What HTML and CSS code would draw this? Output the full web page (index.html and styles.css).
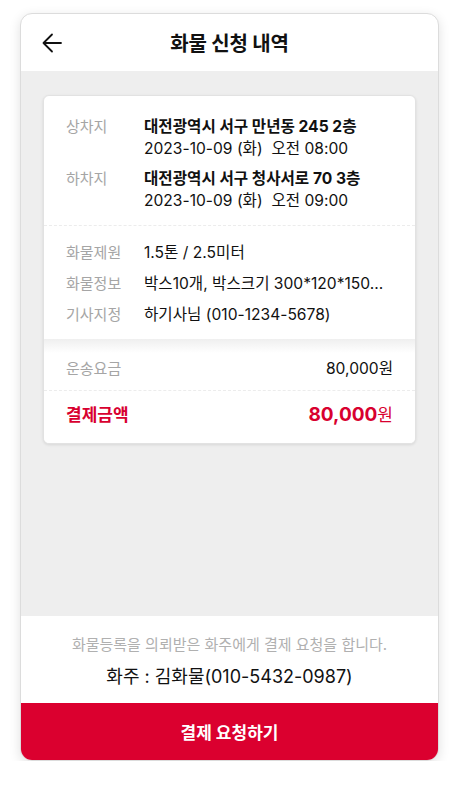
FILE: index.html
```html
<!DOCTYPE html>
<html lang="ko">
<head>
<meta charset="utf-8">
<title>화물 신청 내역</title>
<link rel="stylesheet" href="styles.css">
</head>
<body>
<div class="phone">
  <header class="topbar">
    <button class="back" aria-label="뒤로">
      <svg width="22" height="22" viewBox="0 0 22 22" fill="none" stroke="#111" stroke-width="1.8" stroke-linecap="round" stroke-linejoin="round"><path d="M20 11H2.5M11 2.5L2.5 11L11 19.5"/></svg>
    </button>
    <h1 class="title">화물 신청 내역</h1>
    <span class="spacer"></span>
  </header>
  <main class="content">
    <section class="card">
      <div class="sec sec-route">
        <div class="row">
          <span class="label">상차지</span>
          <div class="val">
            <div class="strong">대전광역시 서구 만년동 245 2층</div>
            <div>2023-10-09 (화)&nbsp; 오전 08:00</div>
          </div>
        </div>
        <div class="row">
          <span class="label">하차지</span>
          <div class="val">
            <div class="strong">대전광역시 서구 청사서로 70 3층</div>
            <div>2023-10-09 (화)&nbsp; 오전 09:00</div>
          </div>
        </div>
      </div>
      <div class="sec sec-info">
        <div class="row"><span class="label">화물제원</span><div class="val">1.5톤 / 2.5미터</div></div>
        <div class="row"><span class="label">화물정보</span><div class="val">박스10개, 박스크기 300*120*150...</div></div>
        <div class="row"><span class="label">기사지정</span><div class="val">하기사님 (010-1234-5678)</div></div>
      </div>
      <div class="sec-fee">
        <div class="fee"><span class="fee-label">운송요금</span><span class="amount">80,000원</span></div>
        <div class="total"><span>결제금액</span><span><b>80,000</b>원</span></div>
      </div>
    </section>
  </main>
  <footer class="bottom">
    <p class="note">화물등록을 의뢰받은 화주에게 결제 요청을 합니다.</p>
    <p class="owner">화주 : 김화물(010-5432-0987)</p>
  </footer>
  <button class="pay">결제 요청하기</button>
</div>
</body>
</html>
```

FILE: styles.css
```css
* { box-sizing: border-box; }
html, body { margin: 0; padding: 0; background: #fff; }
body {
  font-family: "Inter", "Noto Sans CJK KR", sans-serif;
  color: #111;
}
.phone {
  width: 419px;
  height: 748px;
  margin: 13px 0 0 20px;
  border: 1px solid #dcdcdc;
  border-radius: 12px;
  overflow: hidden;
  display: flex;
  flex-direction: column;
  box-shadow: 0 3px 12px rgba(0,0,0,0.12);
  background: #fff;
}
.topbar {
  height: 57px;
  display: grid;
  grid-template-columns: 60px 1fr 60px;
  align-items: center;
  flex: none;
}
.back {
  border: 0;
  background: none;
  padding: 0 0 0 20px;
  margin: 0;
  display: flex;
  align-items: center;
  height: 100%;
  cursor: pointer;
}
.title {
  margin: 0 0 1px;
  text-align: center;
  font-size: 20px;
  font-weight: 700;
  letter-spacing: -0.2px;
}
.content {
  flex: 1;
  background: #eeeeee;
  padding: 24px 22px;
}
.card {
  background: #fff;
  border: 1px solid #e2e2e2;
  border-radius: 6px;
  box-shadow: 0 1px 3px rgba(0,0,0,0.10);
  overflow: hidden;
}
.sec { padding: 0 22px; }
.row { display: flex; }
.label {
  width: 78px;
  flex: none;
  color: #a5a5a5;
  font-size: 15px;
  line-height: 22px;
}
.val {
  font-size: 15.6px;
  line-height: 22px;
  color: #111;
}
.strong { font-weight: 700; }
.sec-route {
  padding-top: 20px;
  padding-bottom: 13px;
  display: flex;
  flex-direction: column;
  gap: 8px;
  border-bottom: 1px dashed #ececec;
}
.sec-info {
  padding-top: 16px;
  padding-bottom: 13px;
  display: flex;
  flex-direction: column;
  gap: 9px;
}
.sec-fee {
  background: linear-gradient(#efefef, #fff 14px);
}
.fee {
  display: flex;
  justify-content: space-between;
  align-items: center;
  padding: 19px 22px 10px;
  border-bottom: 1px dashed #ececec;
  line-height: 22px;
}
.fee-label { color: #a5a5a5; font-size: 15px; }
.fee .amount { color: #111; font-size: 15.6px; }
.total {
  display: flex;
  justify-content: space-between;
  align-items: center;
  padding: 13px 22px 17px;
  color: #d8002f;
  font-size: 17px;
  line-height: 22px;
  font-weight: 700;
}
.total span:last-child { font-weight: 400; }
.total b { font-weight: 700; font-size: 19px; }
.bottom {
  flex: none;
  height: 87px;
  background: #fff;
  text-align: center;
  padding-top: 19px;
}
.note {
  margin: 0;
  font-size: 15px;
  line-height: 20px;
  color: #b0b0b0;
}
.owner {
  margin: 11px 0 0;
  font-size: 18px;
  line-height: 22px;
  color: #111;
}
.pay {
  flex: none;
  height: 57px;
  border: 0;
  margin: 0;
  background: #db002f;
  color: #fff;
  font-family: inherit;
  font-size: 17px;
  font-weight: 700;
  cursor: pointer;
}
```
